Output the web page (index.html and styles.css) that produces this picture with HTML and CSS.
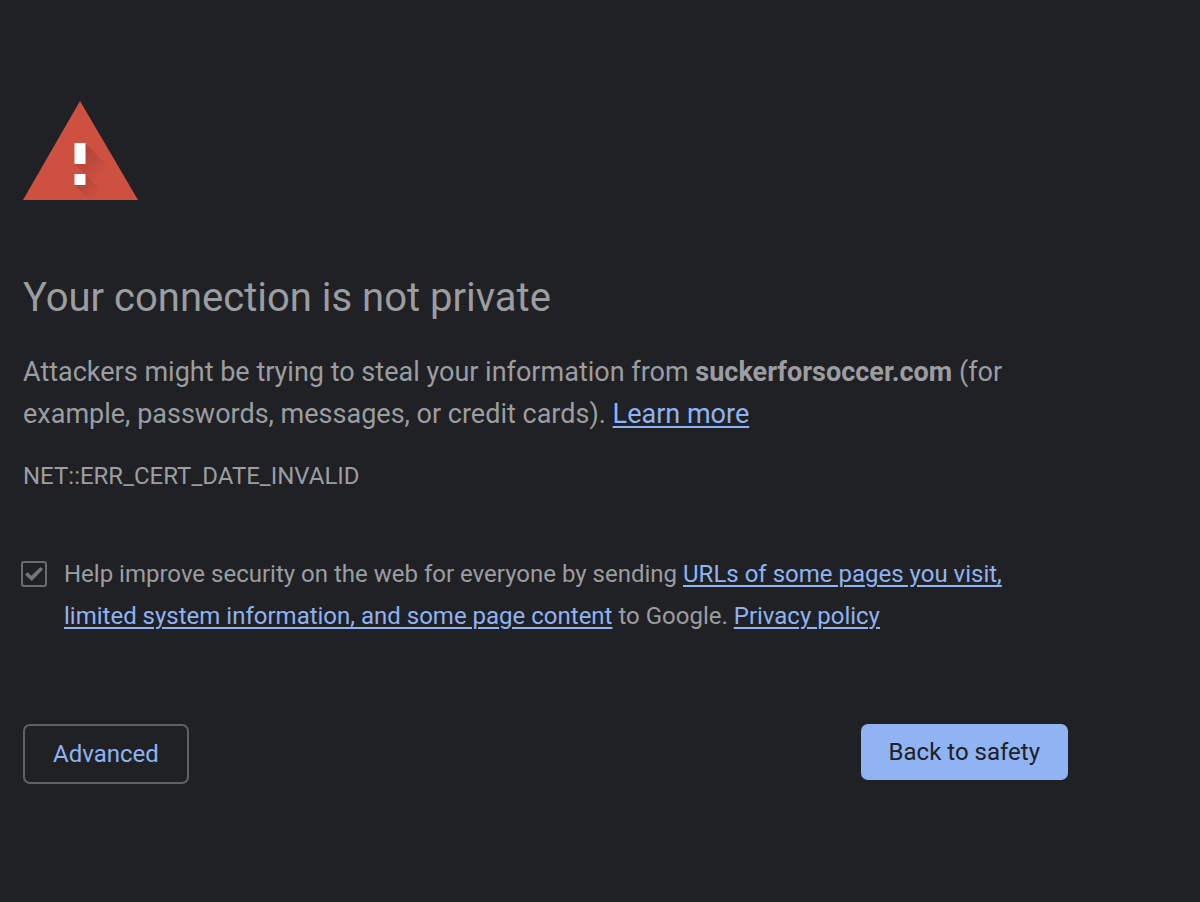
FILE: index.html
```html
<!DOCTYPE html>
<html lang="en">
<head>
    <meta charset="UTF-8">
    <meta name="viewport" content="width=device-width, initial-scale=1.0">
    <title>Privacy error</title>
    <link rel="stylesheet" href="styles.css">
</head>
<body>
    <main class="interstitial">
        <svg class="icon" viewBox="0 0 115 99" aria-hidden="true">
            <defs>
                <linearGradient id="shadow" gradientUnits="userSpaceOnUse" x1="57" y1="48" x2="80" y2="71">
                    <stop offset="0" stop-color="#9c3b32" stop-opacity="0.6"/>
                    <stop offset="1" stop-color="#9c3b32" stop-opacity="0"/>
                </linearGradient>
                <linearGradient id="shadowDot" gradientUnits="userSpaceOnUse" x1="57" y1="78" x2="73" y2="94">
                    <stop offset="0" stop-color="#9c3b32" stop-opacity="0.6"/>
                    <stop offset="1" stop-color="#9c3b32" stop-opacity="0"/>
                </linearGradient>
            </defs>
            <path fill="#cd5041" d="M57 0l58 99H0z"/>
            <path fill="url(#shadow)" d="M62 42l27 27v28L51 63z"/>
            <path fill="url(#shadowDot)" d="M62 73l26 26H66L51 84z"/>
            <path fill="#fff" d="M51.500 42h11v21h-11zM51.500 73h11v11h-11z"/>
        </svg>

        <h1>Your connection is not private</h1>
        <p class="message">Attackers might be trying to steal your information from <strong>suckerforsoccer.com</strong> (for example, passwords, messages, or credit cards). <a href="#">Learn more</a></p>
        <div class="error-code">NET::ERR_CERT_DATE_INVALID</div>

        <div class="opt-in">
            <input type="checkbox" id="optIn" checked>
            <label for="optIn">Help improve security on the web for everyone by sending <a href="#">URLs of some pages you visit, limited system information, and some page content</a> to Google. <a href="#">Privacy policy</a></label>
        </div>

        <div class="nav">
            <button type="button" class="secondary">Advanced</button>
            <button type="button" class="primary">Back to safety</button>
        </div>
    </main>
</body>
</html>
```
FILE: styles.css
```css
body {
    margin: 0;
    background: #202124;
    color: #9b9da1;
    font-family: Roboto, sans-serif;
}
.interstitial {
    max-width: 1045px;
    padding: 101px 23px 0;
}
.icon {
    display: block;
    width: 115px;
    height: 99px;
}
h1 {
    margin: 73px 0 28px;
    font-size: 40px;
    line-height: 50px;
    font-weight: 400;
}
.message {
    margin: 0;
    font-size: 27px;
    line-height: 42px;
}
a {
    color: #8fb3f3;
    text-decoration-thickness: 2px;
    text-underline-offset: 3px;
}
.error-code {
    margin-top: 26px;
    font-size: 24px;
    line-height: 30px;
}
.opt-in {
    display: flex;
    gap: 17px;
    margin-top: 62px;
    font-size: 24px;
    line-height: 42px;
}
.opt-in input {
    flex: none;
    display: grid;
    place-items: center;
    appearance: none;
    box-sizing: border-box;
    width: 26px;
    height: 26px;
    margin: 8px 0 0 -2px;
    border: 2px solid #6b6c6e;
    border-radius: 3px;
}
.opt-in input:checked::before {
    content: "";
    width: 18px;
    height: 14px;
    background: #747577;
    clip-path: polygon(0 55%, 14% 38%, 36% 62%, 86% 0, 100% 16%, 38% 100%);
}
.nav {
    display: flex;
    justify-content: space-between;
    align-items: flex-start;
    margin-top: 87px;
}
button {
    padding: 0 28px;
    border: none;
    border-radius: 7px;
    font: 400 24px/56px Roboto, sans-serif;
    cursor: pointer;
}
.primary {
    background: #8fb3f3;
    color: #202124;
}
.secondary {
    border: 2px solid #606164;
    background: none;
    color: #8fb3f3;
}
```
